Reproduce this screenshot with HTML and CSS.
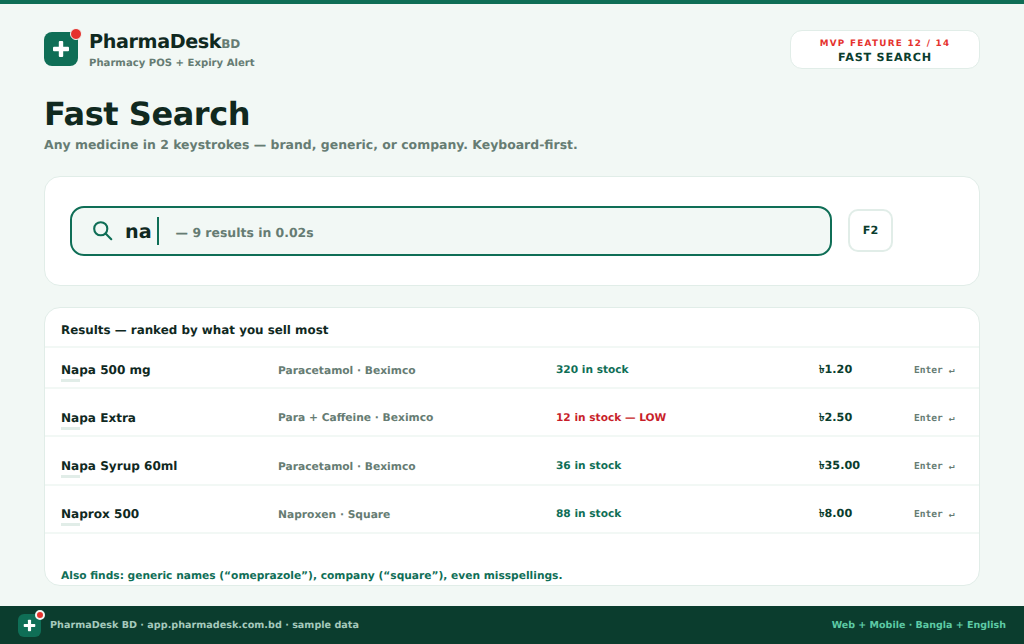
FILE: index.html
```html
<!DOCTYPE html>
<html lang="en">
<head>
    <meta charset="UTF-8">
    <title>PharmaDesk BD - Fast Search</title>
    <link rel="stylesheet" href="styles.css">
</head>
<body>
    <div class="topbar"></div>

    <header class="header">
        <div class="brand">
            <div class="logo">
                <svg class="logo-plus" viewBox="0 0 18 18"><rect x="1" y="6.8" width="16" height="4.4" rx="1" /><rect x="6.8" y="1" width="4.4" height="16" rx="1" /></svg>
                <span class="logo-dot"></span>
            </div>
            <div>
                <div class="brand-name">PharmaDesk<span class="brand-bd">BD</span></div>
                <div class="brand-tag">Pharmacy POS + Expiry Alert</div>
            </div>
        </div>
        <div class="badge">
            <div class="badge-top">MVP FEATURE 12 / 14</div>
            <div class="badge-main">FAST SEARCH</div>
        </div>
    </header>

    <main class="main">
        <h1 class="title">Fast Search</h1>
        <p class="subtitle">Any medicine in 2 keystrokes — brand, generic, or company. Keyboard-first.</p>

        <section class="search-card">
            <div class="search-box">
                <svg class="search-icon" viewBox="0 0 24 24"><circle cx="10" cy="10" r="7.5" /><path d="M15.5 15.5L22 22" /></svg>
                <span class="query">na</span>
                <span class="caret"></span>
                <span class="timing">— 9 results in 0.02s</span>
            </div>
            <div class="key">F2</div>
        </section>

        <section class="results">
            <div class="results-head">Results — ranked by what you sell most</div>

            <div class="row first">
                <div class="name">Napa 500 mg</div>
                <div class="generic">Paracetamol · Beximco</div>
                <div class="stock">320 in stock</div>
                <div class="price">৳1.20</div>
                <div class="enter">Enter ↵</div>
            </div>
            <div class="row">
                <div class="name">Napa Extra</div>
                <div class="generic">Para + Caffeine · Beximco</div>
                <div class="stock low">12 in stock — LOW</div>
                <div class="price">৳2.50</div>
                <div class="enter">Enter ↵</div>
            </div>
            <div class="row">
                <div class="name">Napa Syrup 60ml</div>
                <div class="generic">Paracetamol · Beximco</div>
                <div class="stock">36 in stock</div>
                <div class="price">৳35.00</div>
                <div class="enter">Enter ↵</div>
            </div>
            <div class="row">
                <div class="name">Naprox 500</div>
                <div class="generic">Naproxen · Square</div>
                <div class="stock">88 in stock</div>
                <div class="price">৳8.00</div>
                <div class="enter">Enter ↵</div>
            </div>

            <div class="also">Also finds: generic names (“omeprazole”), company (“square”), even misspellings.</div>
        </section>
    </main>

    <footer class="footer">
        <div class="footer-left">
            <div class="logo small">
                <svg class="logo-plus" viewBox="0 0 18 18"><rect x="1" y="6.8" width="16" height="4.4" rx="1" /><rect x="6.8" y="1" width="4.4" height="16" rx="1" /></svg>
                <span class="logo-dot"></span>
            </div>
            <span>PharmaDesk BD · app.pharmadesk.com.bd · sample data</span>
        </div>
        <div class="footer-right">Web + Mobile · Bangla + English</div>
    </footer>
</body>
</html>
```

FILE: styles.css
```css
* {
    box-sizing: border-box;
}

body {
    margin: 0;
    height: 644px;
    overflow: hidden;
    background-color: #f2f8f5;
    color: #10291f;
    font-family: "DejaVu Sans", sans-serif;
    font-weight: bold;
    text-rendering: geometricPrecision;
}

.topbar {
    height: 4px;
    background-color: #0f6e56;
}

/* Header */
.header {
    display: flex;
    justify-content: space-between;
    align-items: flex-start;
    padding: 26px 44px 0;
    height: 90px;
}

.brand {
    display: flex;
    align-items: flex-start;
    gap: 11px;
}

.logo {
    position: relative;
    width: 34px;
    height: 34px;
    margin-top: 2px;
    border-radius: 8px;
    background-color: #0f6e56;
    display: flex;
    justify-content: center;
    align-items: center;
}

.logo-plus {
    width: 18px;
    height: 18px;
    fill: #fff;
}

.logo-dot {
    position: absolute;
    top: -4px;
    right: -4px;
    width: 12px;
    height: 12px;
    border-radius: 50%;
    background-color: #e5322d;
    border: 1.5px solid #f2f8f5;
}

.brand-name {
    font-size: 19.2px;
    line-height: 24px;
    letter-spacing: -0.4px;
}

.brand-bd {
    font-size: 12px;
    letter-spacing: 0;
    color: #667c73;
}

.brand-tag {
    font-size: 10.1px;
    line-height: 15px;
    color: #667c73;
}

.badge {
    width: 190px;
    height: 39px;
    background-color: #fff;
    border: 1px solid #e1ede8;
    border-radius: 12px;
    text-align: center;
    padding-top: 7px;
}

.badge-top {
    font-size: 8.8px;
    line-height: 12px;
    letter-spacing: 1.3px;
    color: #e5322d;
}

.badge-main {
    font-size: 11.2px;
    line-height: 15px;
    letter-spacing: 0.8px;
    color: #0b3d2e;
}

/* Main */
.main {
    padding: 0 44px;
}

.title {
    margin: 0;
    font-size: 32px;
    line-height: 40px;
    letter-spacing: -0.45px;
}

.subtitle {
    margin: 1px 0 0;
    font-size: 12.45px;
    line-height: 20px;
    color: #667c73;
}

.search-card {
    margin-top: 21px;
    height: 110px;
    background-color: #fff;
    border: 1px solid #e1ede8;
    border-radius: 16px;
    padding: 29px 25px 0;
    display: flex;
    align-items: flex-start;
    gap: 16px;
}

.search-box {
    width: 762px;
    height: 50px;
    background-color: #f2f8f5;
    border: 2px solid #0f6e56;
    border-radius: 14px;
    display: flex;
    align-items: center;
    padding-left: 20px;
}

.search-icon {
    width: 21px;
    height: 21px;
    margin-top: -2px;
    fill: none;
    stroke: #0f6e56;
    stroke-width: 2.4;
    stroke-linecap: round;
}

.query {
    margin-left: 12px;
    font-size: 19.2px;
}

.caret {
    width: 2px;
    height: 28px;
    margin-left: 5px;
    background-color: #0f6e56;
}

.timing {
    margin-left: 17px;
    margin-top: 3px;
    font-size: 12.45px;
    color: #667c73;
}

.key {
    width: 45px;
    height: 43px;
    margin-top: 3px;
    background-color: #fff;
    border: 2px solid #e1ede8;
    border-radius: 10px;
    display: flex;
    justify-content: center;
    align-items: center;
    font-size: 11.2px;
    color: #0b3d2e;
}

/* Results */
.results {
    margin-top: 21px;
    height: 279px;
    background-color: #fff;
    border: 1px solid #e1ede8;
    border-radius: 16px;
}

.results-head {
    height: 38px;
    padding: 14px 16px 0;
    font-size: 11.9px;
    line-height: 16px;
}

.row {
    display: grid;
    grid-template-columns: 217px 278px 263px 95px 1fr;
    align-items: center;
    height: 48.4px;
    padding: 11px 0 0 16px;
    border-top: 2px solid #f2f8f5;
}

.row.first {
    height: 41px;
    padding-top: 5px;
}

.name {
    font-size: 12.05px;
    line-height: 16px;
    position: relative;
}

.name::after {
    content: "";
    position: absolute;
    left: 0;
    bottom: -4px;
    width: 19px;
    height: 3px;
    background-color: #e1ede8;
}

.generic {
    font-size: 10.7px;
    color: #667c73;
}

.stock {
    font-size: 10.6px;
    color: #0f6e56;
}

.stock.low {
    color: #c81e2a;
}

.price {
    padding-top: 1px;
    font-size: 11.2px;
    color: #0b3d2e;
}

.enter {
    padding-top: 1px;
    font-family: "DejaVu Sans Mono", monospace;
    font-size: 9.6px;
    color: #667c73;
}

.also {
    border-top: 2px solid #f2f8f5;
    padding: 35px 16px 0;
    font-size: 10.65px;
    line-height: 14px;
    color: #0f6e56;
}

/* Footer */
.footer {
    position: absolute;
    left: 0;
    right: 0;
    bottom: 0;
    height: 38px;
    background-color: #0b3d2e;
    display: flex;
    justify-content: space-between;
    align-items: center;
    padding: 0 18px;
    font-size: 9.63px;
}

.footer-left {
    display: flex;
    align-items: center;
    gap: 9px;
    color: #a5c9bc;
}

.footer-right {
    font-size: 9.5px;
    color: #5dcaa5;
}

.logo.small {
    width: 23px;
    height: 23px;
    margin-top: 0;
    border-radius: 6px;
}

.logo.small .logo-plus {
    width: 13px;
    height: 13px;
}

.logo.small .logo-dot {
    width: 10px;
    height: 10px;
    top: -4px;
    right: -4px;
    border: 2px solid #f2f8f5;
}
```
